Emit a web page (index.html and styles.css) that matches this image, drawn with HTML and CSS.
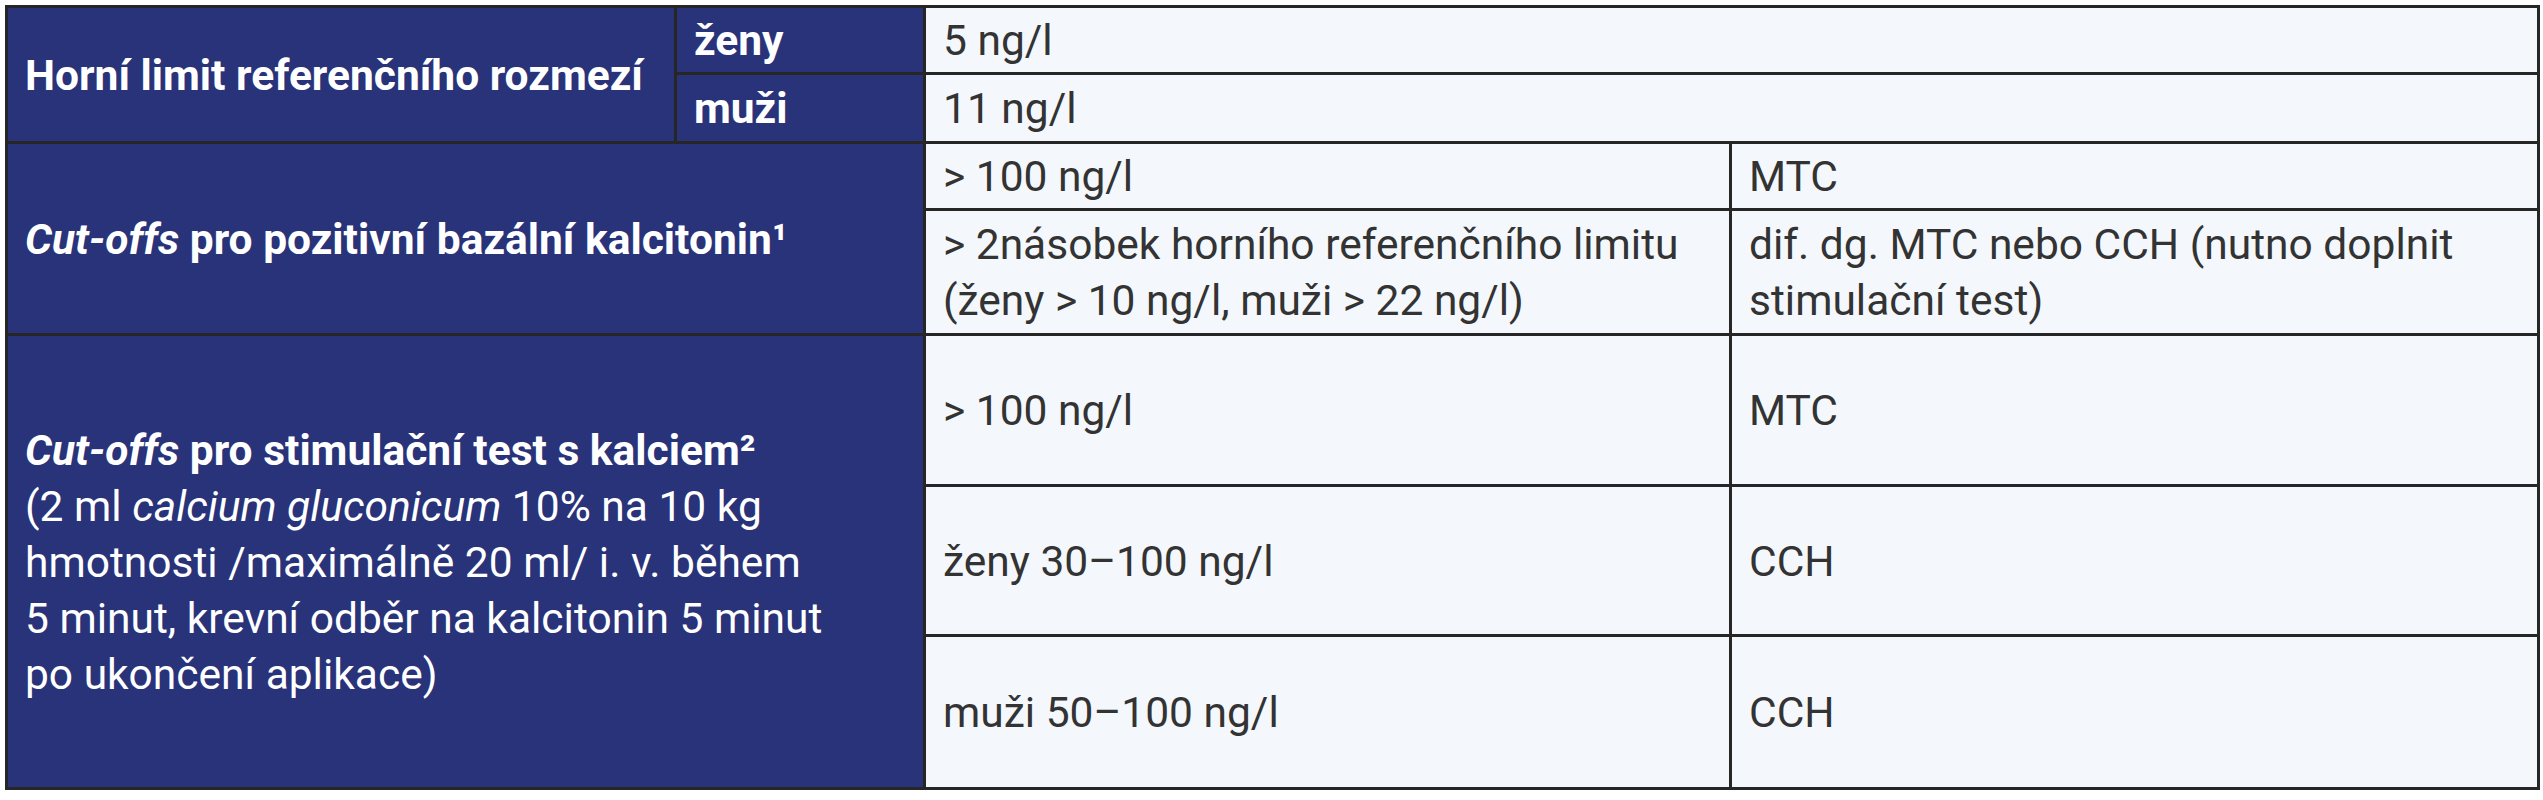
FILE: index.html
```html
<!DOCTYPE html>
<html lang="cs">
<head>
<meta charset="utf-8">
<title>Kalcitonin</title>
<link rel="stylesheet" href="styles.css">
</head>
<body>
<table class="tbl">
  <colgroup>
    <col class="c1"><col class="c2"><col class="c3"><col class="c4">
  </colgroup>
  <tbody>
    <tr class="r1">
      <th class="head bold nowrap" rowspan="2">Horní limit referenčního rozmezí</th>
      <th class="head bold">ženy</th>
      <td class="val" colspan="2">5 ng/l</td>
    </tr>
    <tr class="r2">
      <th class="head bold">muži</th>
      <td class="val" colspan="2">11 ng/l</td>
    </tr>
    <tr class="r3">
      <th class="head bold nowrap" colspan="2" rowspan="2"><i>Cut-offs</i> pro pozitivní bazální kalcitonin¹</th>
      <td class="val">&gt; 100 ng/l</td>
      <td class="val">MTC</td>
    </tr>
    <tr class="r4">
      <td class="val">&gt; 2násobek horního referenčního limitu<br>(ženy &gt; 10 ng/l, muži &gt; 22 ng/l)</td>
      <td class="val">dif. dg. MTC nebo CCH (nutno doplnit<br>stimulační test)</td>
    </tr>
    <tr class="r5">
      <th class="head nowrap" colspan="2" rowspan="3"><span class="bold"><i>Cut-offs</i> pro stimulační test s kalciem²</span><br>(2 ml <i>calcium gluconicum</i> 10% na 10 kg<br>hmotnosti /maximálně 20 ml/ i. v. během<br>5 minut, krevní odběr na kalcitonin 5 minut<br>po ukončení aplikace)</th>
      <td class="val">&gt; 100 ng/l</td>
      <td class="val">MTC</td>
    </tr>
    <tr class="r6">
      <td class="val">ženy 30–100 ng/l</td>
      <td class="val">CCH</td>
    </tr>
    <tr class="r7">
      <td class="val">muži 50–100 ng/l</td>
      <td class="val">CCH</td>
    </tr>
  </tbody>
</table>
</body>
</html>
```

FILE: styles.css
```css
html, body {
  margin: 0;
  padding: 0;
  background: #ffffff;
}

body {
  padding: 5px 0 0 5px;
  font-family: Roboto, "Liberation Sans", sans-serif;
}

.tbl {
  border-collapse: collapse;
  table-layout: fixed;
  width: 2535px;
  font-size: 42.5px;
  line-height: 56px;
}

.c1 { width: 669px; }
.c2 { width: 249px; }
.c3 { width: 806px; }
.c4 { width: 808px; }

.tbl th,
.tbl td {
  border: 3px solid #262626;
  padding: 2px 12px 0 17px;
  vertical-align: middle;
  text-align: left;
}

.nowrap {
  white-space: nowrap;
}

.head {
  background: #293379;
  color: #ffffff;
  font-weight: 400;
}

.head.bold,
.bold {
  font-weight: 700;
}

.val {
  background: #f4f8fc;
  color: #333333;
}

.r1 { height: 67px; }
.r2 { height: 69px; }
.r3 { height: 67px; }
.r4 { height: 125px; }
.r5 { height: 151px; }
.r6 { height: 150px; }
.r7 { height: 153px; }
```
